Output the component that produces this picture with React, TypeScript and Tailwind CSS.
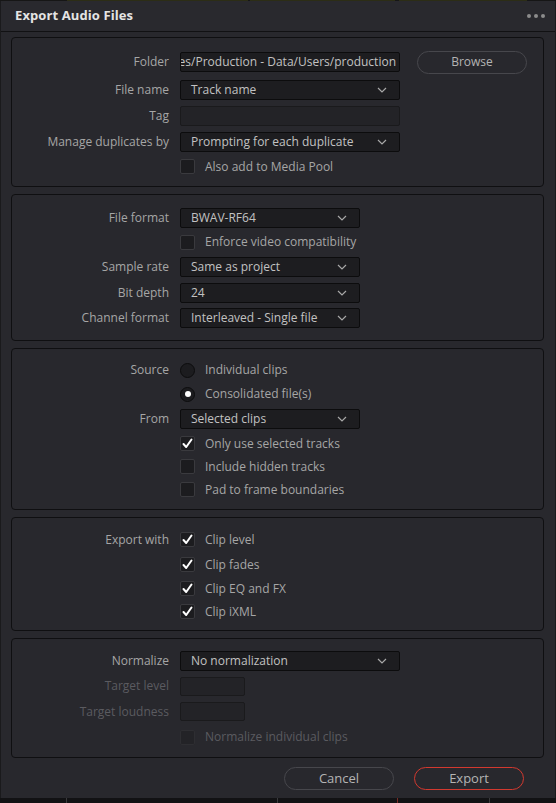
import React from "react";

const font = { fontFamily: '"Open Sans", "Noto Sans", sans-serif' };

function Chevron() {
  return (
    <svg width="10" height="6" viewBox="0 0 10 6" className="shrink-0">
      <path d="M1 1 L5 5 L9 1" fill="none" stroke="#a8a8a8" strokeWidth="1.2" />
    </svg>
  );
}

function Dropdown({ value, wide }: { value: string; wide?: boolean }) {
  return (
    <div
      className={
        (wide ? "w-[220px]" : "w-[180px]") +
        " h-[20px] bg-[#1d1d20] border border-[#0c0c0d] rounded-[2px] flex items-center justify-between pl-[10px] pr-[12px] text-[#c2c2c2]"
      }
    >
      <span className="whitespace-nowrap">{value}</span>
      <Chevron />
    </div>
  );
}

function Check({ checked, disabled }: { checked?: boolean; disabled?: boolean }) {
  return (
    <div
      className={
        "w-[15px] h-[15px] rounded-[2px] border flex items-center justify-center shrink-0 " +
        (disabled ? "bg-[#232327] border-[#2e2e32]" : "bg-[#1c1c1f] border-[#3a3a3e]")
      }
    >
      {checked && (
        <svg width="11" height="11" viewBox="0 0 11 11">
          <path d="M1.5 6 L4.2 9 L9.5 1.5" fill="none" stroke="#ffffff" strokeWidth="2" strokeLinecap="round" strokeLinejoin="round" />
        </svg>
      )}
    </div>
  );
}

function Radio({ selected }: { selected?: boolean }) {
  return (
    <div className="w-[15px] h-[15px] rounded-full bg-[#1c1c1f] border border-[#0c0c0d] flex items-center justify-center shrink-0">
      {selected && <div className="w-[6px] h-[6px] rounded-full bg-white" />}
    </div>
  );
}

function Row({
  label,
  h,
  disabled,
  children,
}: {
  label?: string;
  h: string;
  disabled?: boolean;
  children: React.ReactNode;
}) {
  return (
    <div className={"flex items-center " + h}>
      <div
        className={
          "w-[157px] text-right whitespace-nowrap " + (disabled ? "text-[#5b5b60]" : "text-[#a6a6a6]")
        }
      >
        {label}
      </div>
      <div className="ml-[11px] flex items-center">{children}</div>
    </div>
  );
}

function CheckRow({
  label,
  text,
  checked,
  disabled,
  h,
}: {
  label?: string;
  text: string;
  checked?: boolean;
  disabled?: boolean;
  h: string;
}) {
  return (
    <Row label={label} h={h}>
      <Check checked={checked} disabled={disabled} />
      <span className={"ml-[10px] whitespace-nowrap " + (disabled ? "text-[#5b5b60]" : "text-[#a6a6a6]")}>
        {text}
      </span>
    </Row>
  );
}

function RadioRow({ label, text, selected, h }: { label?: string; text: string; selected?: boolean; h: string }) {
  return (
    <Row label={label} h={h}>
      <Radio selected={selected} />
      <span className="ml-[10px] whitespace-nowrap text-[#a6a6a6]">{text}</span>
    </Row>
  );
}

function Panel({ className, children }: { className: string; children: React.ReactNode }) {
  return (
    <div className={"border border-[#0f0f11] rounded-[4px] bg-[#28282d] flex flex-col " + className}>
      {children}
    </div>
  );
}

export default function App() {
  return (
    <div className="w-[556px] h-[803px] bg-[#121214] relative overflow-hidden text-[12px]" style={font}>
      {/* top strip */}
      <div className="h-[1px] flex">
        <div className="w-[67px] bg-[#161616]" />
        <div className="w-[181px] bg-[#2c2d16]" />
        <div className="w-[2px] bg-[#161616]" />
        <div className="w-[145px] bg-[#2c2d16]" />
        <div className="w-[4px] bg-[#161616]" />
        <div className="w-[128px] bg-[#2c2d16]" />
        <div className="flex-1 bg-[#161616]" />
      </div>
      <div className="h-[797px] bg-[#28282d] border-l border-r border-[#1a1a1c] flex flex-col">
        {/* title bar */}
        <div className="h-[31px] flex items-center justify-between pl-[14px] pr-[10px] bg-[#29292e] border-b border-[#111113]">
          <span className="text-[13px] font-bold text-[#e4e4e4] tracking-[0.1px]">Export Audio Files</span>
          <div className="flex gap-[3px]">
            <div className="w-[4px] h-[4px] rounded-full bg-[#8c8c8c]" />
            <div className="w-[4px] h-[4px] rounded-full bg-[#8c8c8c]" />
            <div className="w-[4px] h-[4px] rounded-full bg-[#8c8c8c]" />
          </div>
        </div>

        <div className="flex flex-col gap-[7px] pt-[5px] pl-[10px] pr-[11px]">
          {/* panel 1 */}
          <Panel className="h-[150px] pt-[11px]">
            <Row label="Folder" h="h-[26px]">
              <div className="w-[220px] h-[20px] bg-[#1d1d20] border border-[#0c0c0d] rounded-[2px] flex items-center justify-end overflow-hidden pr-[3px] text-[#c2c2c2]">
                <span className="whitespace-nowrap">es/Production - Data/Users/production</span>
              </div>
              <div className="ml-[17px] w-[110px] h-[23px] rounded-full border border-[#47474c] flex items-center justify-center text-[#b4b4b4]">
                Browse
              </div>
            </Row>
            <div className="mt-[2px]">
              <Row label="File name" h="h-[26px]">
                <Dropdown value="Track name" wide />
              </Row>
            </div>
            <Row label="Tag" h="h-[26px]">
              <div className="w-[220px] h-[20px] bg-[#232327] border border-[#1a1a1c] rounded-[2px]" />
            </Row>
            <Row label="Manage duplicates by" h="h-[26px]">
              <Dropdown value="Prompting for each duplicate" wide />
            </Row>
            <CheckRow text="Also add to Media Pool" h="h-[23px]" />
          </Panel>

          {/* panel 2 */}
          <Panel className="h-[147px] pt-[10px]">
            <Row label="File format" h="h-[25px]">
              <Dropdown value="BWAV-RF64" />
            </Row>
            <CheckRow text="Enforce video compatibility" h="h-[24px]" />
            <Row label="Sample rate" h="h-[26px]">
              <Dropdown value="Same as project" />
            </Row>
            <Row label="Bit depth" h="h-[25px]">
              <Dropdown value="24" />
            </Row>
            <Row label="Channel format" h="h-[26px]">
              <Dropdown value="Interleaved - Single file" />
            </Row>
          </Panel>

          {/* panel 3 */}
          <Panel className="h-[162px] pt-[9px]">
            <RadioRow label="Source" text="Individual clips" h="h-[24px]" />
            <RadioRow text="Consolidated file(s)" selected h="h-[24px]" />
            <Row label="From" h="h-[26px]">
              <Dropdown value="Selected clips" />
            </Row>
            <CheckRow text="Only use selected tracks" checked h="h-[23px]" />
            <CheckRow text="Include hidden tracks" h="h-[23px]" />
            <CheckRow text="Pad to frame boundaries" h="h-[23px]" />
          </Panel>

          {/* panel 4 */}
          <Panel className="h-[114px] pt-[9px]">
            <CheckRow label="Export with" text="Clip level" checked h="h-[25px]" />
            <CheckRow text="Clip fades" checked h="h-[25px]" />
            <CheckRow text="Clip EQ and FX" checked h="h-[23px]" />
            <CheckRow text="Clip iXML" checked h="h-[23px]" />
          </Panel>

          {/* panel 5 */}
          <Panel className="h-[120px] pt-[9px]">
            <Row label="Normalize" h="h-[25px]">
              <Dropdown value="No normalization" wide />
            </Row>
            <Row label="Target level" h="h-[26px]" disabled>
              <div className="w-[65px] h-[19px] bg-[#232327] border border-[#1a1a1c] rounded-[2px]" />
            </Row>
            <Row label="Target loudness" h="h-[25px]" disabled>
              <div className="w-[65px] h-[19px] bg-[#232327] border border-[#1a1a1c] rounded-[2px]" />
            </Row>
            <CheckRow text="Normalize individual clips" disabled h="h-[26px]" />
          </Panel>
        </div>

        {/* buttons */}
        <div className="flex justify-end gap-[20px] pr-[31px] mt-[9px]">
          <div className="w-[110px] h-[23px] rounded-full border border-[#47474c] flex items-center justify-center text-[13px] text-[#b4b4b4]">
            Cancel
          </div>
          <div className="w-[110px] h-[23px] rounded-full border border-[#d2392f] flex items-center justify-center text-[13px] text-[#b4b4b4]">
            Export
          </div>
        </div>
      </div>
      {/* bottom strip lines */}
      <div className="h-[5px] flex">
        <div className="w-[66px]" />
        <div className="w-[1px] bg-[#3a3a3c]" />
        <div className="w-[210px]" />
        <div className="w-[1px] bg-[#3a3a3c]" />
        <div className="w-[119px]" />
        <div className="w-[1px] bg-[#7a2a24]" />
        <div className="w-[91px]" />
        <div className="w-[1px] bg-[#3a3a3c]" />
      </div>
    </div>
  );
}
